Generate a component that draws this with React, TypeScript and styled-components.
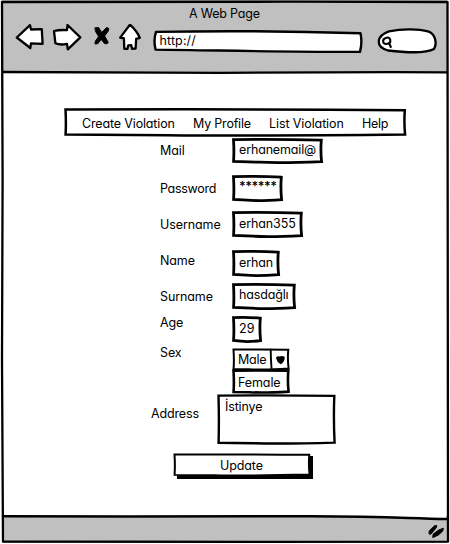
import React from "react";
import styled, { createGlobalStyle } from "styled-components";

const GlobalStyle = createGlobalStyle`
  * { box-sizing: border-box; }
  body { margin: 0; background: #fff; }
`;

const BrowserWindow = styled.div`
  position: relative;
  display: flex;
  flex-direction: column;
  width: 450px;
  height: 544px;
  overflow: hidden;
  background: #fff;
  color: #000;
  font: 12.5px/16px Inter, "Liberation Sans", sans-serif;
  font-feature-settings: "cv11" 1, "calt" 0;
`;

const Drawing = styled.svg`
  position: absolute;
  left: 0;
  top: 0;
  overflow: visible;
  pointer-events: none;
  fill: none;
  stroke: #000;
  stroke-linejoin: round;
  stroke-linecap: round;
`;

const Text = styled.span<{ $track?: number; $bold?: boolean }>`
  position: relative;
  display: block;
  white-space: pre;
  font-weight: ${(p) => (p.$bold ? 600 : 400)};
  letter-spacing: ${(p) => p.$track ?? -0.1}px;
`;

const Header = styled.header`
  height: 73px;
  flex: none;
  margin: 0 3px 0 2px;
  background: #c0c0c0;
`;

const Title = styled.div`
  height: 24px;
  padding: 6px 0 0 187px;
`;

const Toolbar = styled.div`
  display: flex;
  align-items: flex-start;
  height: 32px;
  padding-left: 12px;
`;

const Icon = styled.svg`
  display: block;
  flex: none;
  fill: #fff;
  stroke: #000;
  stroke-width: 2.3;
  stroke-linejoin: round;
  stroke-linecap: round;
`;

const AddressBar = styled.div`
  position: relative;
  flex: none;
  width: 210px;
  height: 24px;
  margin: 7px 0 0 8px;
  padding: 2px 0 0 6.5px;
`;

const SearchBox = styled.div`
  position: relative;
  flex: none;
  width: 61px;
  height: 26px;
  margin: 5px 0 0 14px;
`;

const Page = styled.main`
  flex: 1;
  padding-top: 35px;
`;

const MenuBar = styled.nav`
  position: relative;
  display: flex;
  width: 342px;
  height: 29px;
  margin-left: 64px;
  padding: 8px 0 0 18px;
`;

const MenuItem = styled.div<{ $width: number }>`
  width: ${(p) => p.$width}px;
`;

const Row = styled.div<{ $gap?: number; $left?: number }>`
  display: flex;
  align-items: flex-start;
  margin-top: ${(p) => p.$gap ?? 0}px;
  padding-left: ${(p) => p.$left ?? 160}px;
`;

const Label = styled.div<{ $drop: number; $width?: number }>`
  width: ${(p) => p.$width ?? 72}px;
  height: 16px;
  margin-top: ${(p) => p.$drop}px;
`;

const Box = styled.div<{ $w: number; $h: number; $pad?: string }>`
  position: relative;
  width: ${(p) => p.$w}px;
  height: ${(p) => p.$h}px;
  padding: ${(p) => p.$pad ?? "4px 0 0 7px"};
`;

const Footer = styled.footer`
  height: 27px;
  flex: none;
  margin: 0 3px 1px 2px;
  background: #c0c0c0;
`;

/* Rectangle outline with slightly uneven, hand-drawn sides. */
function Sketch({ w, h, weight = 2.8, tilt = 1, shadow = false }: { w: number; h: number; weight?: number; tilt?: number; shadow?: boolean }) {
  const r = w - 1.7;
  const b = h - 1.8;
  return (
    <Drawing width={w} height={h}>
      {shadow && <path d={`M4 ${h} H${w} V3`} strokeWidth="4" strokeLinejoin="miter" strokeLinecap="butt" />}
      <path
        fill="#fff"
        strokeWidth={weight}
        strokeLinejoin="miter"
        d={`M1.5 1.6 Q${w * 0.5} ${1.2 - tilt * 0.3} ${r} ${1.5 + tilt * 0.7} Q${r - 0.9} ${h * 0.5} ${r + 0.3} ${b - 0.6} Q${w * 0.55} ${b + 0.9} ${w * 0.3} ${b} L1.6 ${b - tilt * 0.8} Q2.2 ${h * 0.5} 1.5 1.6Z`}
      />
    </Drawing>
  );
}

type FieldProps = { label: string; value: string; w: number; h?: number; gap?: number; drop: number; lt?: number; vt?: number; pad?: string; bold?: boolean };

function Field({ label, value, w, h = 27, gap, drop, lt, vt, pad, bold }: FieldProps) {
  return (
    <Row $gap={gap}>
      <Label $drop={drop}><Text $track={lt}>{label}</Text></Label>
      <Box $w={w} $h={h} $pad={pad}>
        <Sketch w={w} h={h} />
        <Text $track={vt} $bold={bold}>{value}</Text>
      </Box>
    </Row>
  );
}

export default function App() {
  return (
    <BrowserWindow>
      <GlobalStyle />
      <Header>
        <Title><Text $track={-0.2}>A Web Page</Text></Title>
        <Toolbar>
          <Icon width="31" height="30" viewBox="14 24 31 30">
            <path d="M16.8 37.5 L30 25.2 L31 29.5 L41.8 29.2 L42.6 43.8 L31 43.3 L30.3 48 Z" />
          </Icon>
          <Icon width="38" height="30" viewBox="45 24 38 30">
            <path d="M54 31 Q60 29.5 67 30.2 L67.5 25 L80.3 37.3 L67.8 49.3 L67 43.9 Q60 45.3 55.4 43.3 Z" />
          </Icon>
          <Icon width="33" height="30" viewBox="83 24 33 30">
            <path
              d="M95.3 27.8 L98.6 27.6 L101.7 32.5 L106.5 27.6 L108.8 28.4 L108.3 31 L104.6 36 L108.3 42.5 L107 43.8 L104.5 43.6 L101.2 39.4 L97.8 43.7 L95 44 L95.3 41.2 L98.6 36.6 L95.6 31.5 Z"
              fill="#000"
              strokeWidth="1"
            />
          </Icon>
          <Icon width="29" height="30" viewBox="116 24 29 30">
            <path d="M130 24.6 L120.2 37.6 L123.9 38.4 L124.3 48.8 L127.5 48.8 L128.2 45.4 L131.3 45.2 L132 48.8 L135.6 48.5 L136.2 38.8 L139.8 37.8 Q137 31 130 24.6Z" />
          </Icon>
          <AddressBar>
            <Drawing width="210" height="24">
              <path fill="#fff" strokeWidth="2.4" d="M3 .9 C70 -.4 135 0 207.5 2.2 Q209.5 11 207 20.9 C130 21.1 70 19.4 2.5 18.6 Q.3 9 3 .9Z" />
            </Drawing>
            <Text $track={0.12}>http://</Text>
          </AddressBar>
          <SearchBox>
            <Drawing width="61" height="26">
              <path fill="#fff" strokeWidth="2.3" d="M12 2.3 C25 -.4 42 -.1 51 2.4 C59 5 60 15 57 20 C48 25 24 23 11 21.5 C-1.5 18 -1.5 7 12 2.3Z" />
              <path strokeWidth="2.1" d="M8.8 9 C12 7.6 13.8 9.6 13.3 13 C11 15.6 7 15.6 6.2 13 C5.8 10.6 7 9.4 8.8 9Z M12.4 14.6 L13.8 18" />
            </Drawing>
          </SearchBox>
        </Toolbar>
      </Header>
      <Page>
        <MenuBar>
          <Sketch w={342.5} h={29} weight={2.5} />
          <MenuItem $width={111}><Text $track={-0.15}>Create Violation</Text></MenuItem>
          <MenuItem $width={76}><Text $track={-0.2}>My Profile</Text></MenuItem>
          <MenuItem $width={93}><Text $track={-0.1}>List Violation</Text></MenuItem>
          <MenuItem $width={40}><Text $track={-0.3}>Help</Text></MenuItem>
        </MenuBar>
        <Field label="Mail" value="erhanemail@" w={91} h={26} gap={1} drop={5} vt={-0.15} />
        <Field label="Password" value="******" w={51} gap={11} drop={6} lt={-0.3} pad="4px 0 0 7px" vt={-0.5} bold />
        <Field label="Username" value="erhan355" w={71} gap={9} drop={6} vt={-0.1} pad="5px 0 0 7px" />
        <Field label="Name" value="erhan" w={48} gap={12} drop={3} pad="5px 0 0 7px" />
        <Field label="Surname" value="hasdağlı" w={64} gap={6} drop={6} vt={-0.15} />
        <Field label="Age" value="29" w={30} gap={6} drop={-1} pad="5px 0 0 7px" vt={0.1} />
        <Row $gap={5}>
          <Label $drop={-3}><Text>Sex</Text></Label>
          <div>
            <Box $w={58} $h={21} $pad="4px 0 0 6px">
              <Sketch w={58} h={23} weight={2} tilt={0.2} />
              <Text $track={-0.25}>Male</Text>
              <Drawing width="58" height="23">
                <path strokeWidth="1.9" d="M38.7 1.5 Q38.8 10 39.5 20.5" />
                <path fill="#000" strokeWidth="1.6" d="M44.8 9.8 Q46 8.6 48 9.2 Q50 8.4 52 9.4 Q51.5 13.6 48.7 15.4 Q45.6 13.6 44.8 9.8Z" />
              </Drawing>
            </Box>
            <Box $w={58} $h={25} $pad="6px 0 0 6px">
              <Sketch w={58} h={25} weight={2.6} tilt={0.2} />
              <Text>Female</Text>
            </Box>
          </div>
        </Row>
        <Row $left={151}>
          <Label $drop={12} $width={66}><Text $track={-0.15}>Address</Text></Label>
          <Box $w={119} $h={50} $pad="5px 0 0 8px">
            <Sketch w={119} h={51} weight={2.4} tilt={0.5} />
            <Text $track={-0.15}>İstinye</Text>
          </Box>
        </Row>
        <Row $left={173} $gap={9}>
          <Box $w={140} $h={27} $pad="5px 0 0 47px">
            <Sketch w={138} h={24} weight={2} tilt={0.4} shadow />
            <Text>Update</Text>
          </Box>
        </Row>
      </Page>
      <Footer />
      <Drawing width="450" height="544">
        <path strokeWidth="2.3" d="M2 2 C120 1.2 300 1.8 447.5 2 L448 541.7 C300 542.5 150 541 3 541.5 L2 360 L2.6 180Z" />
        <path strokeWidth="2.3" d="M3 72 C120 72 150 73 220 72.8 S370 72 447 72.3" />
        <path fill="#fff" stroke="none" d="M4 514 H446 V518 Q360 515.5 4 516Z" />
        <path strokeWidth="2.5" d="M3 516.3 C100 517 230 516 310 516.2 S400 518 447 519" />
        <path fill="#000" strokeWidth="1" d="M429 533.5 L429.3 530.8 L434.5 525.8 L436.8 525.6 L436.2 527.8 L431 534Z M432.8 537.2 L433 534.3 Q438 529.5 443.3 528.2 L442.8 531 Q439 535.5 433.8 537.3Z" />
      </Drawing>
    </BrowserWindow>
  );
}
